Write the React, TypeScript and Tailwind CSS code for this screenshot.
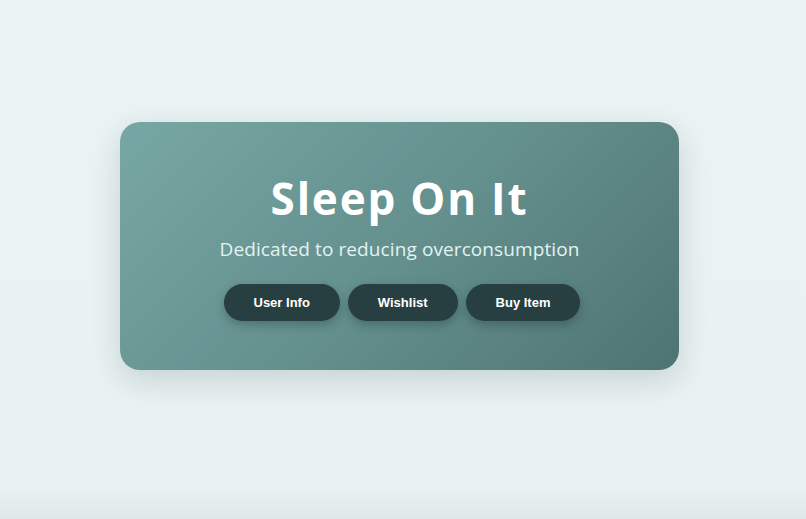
import React from "react";

export default function App() {
  return (
    <div className="min-h-[519px] w-full bg-[linear-gradient(to_bottom,#ebf3f4_0%,#e9f1f2_94%,#dfe8e9_100%)] flex flex-col items-center pt-[122px] pr-[7px]" style={{ fontFamily: '"Open Sans", "Noto Sans", sans-serif' }}>
      <div className="w-[559px] h-[248px] rounded-[20px] bg-[linear-gradient(135deg,#77a7a4_0%,#64908e_50%,#4e7472_100%)] shadow-[0_10px_30px_rgba(40,70,70,0.18)] flex flex-col items-center">
        <h1 className="mt-[48px] text-[44px] leading-[56px] font-bold text-white tracking-[1.8px]">Sleep On It</h1>
        <p className="mt-[11px] text-[19px] leading-[24px] font-medium text-[#e2f3f1] tracking-[0.1px]">Dedicated to reducing overconsumption</p>
        <div className="mt-[23px] ml-[5px] flex gap-[8px]" style={{ fontFamily: '"Liberation Sans", Arial, sans-serif' }}>
          {["User Info", "Wishlist", "Buy Item"].map((t) => (
            <button key={t} className="h-[37px] px-[30px] rounded-full bg-[#273f40] text-white text-[13px] font-bold shadow-[0_4px_10px_rgba(20,40,40,0.3)]">
              {t}
            </button>
          ))}
        </div>
      </div>
    </div>
  );
}
